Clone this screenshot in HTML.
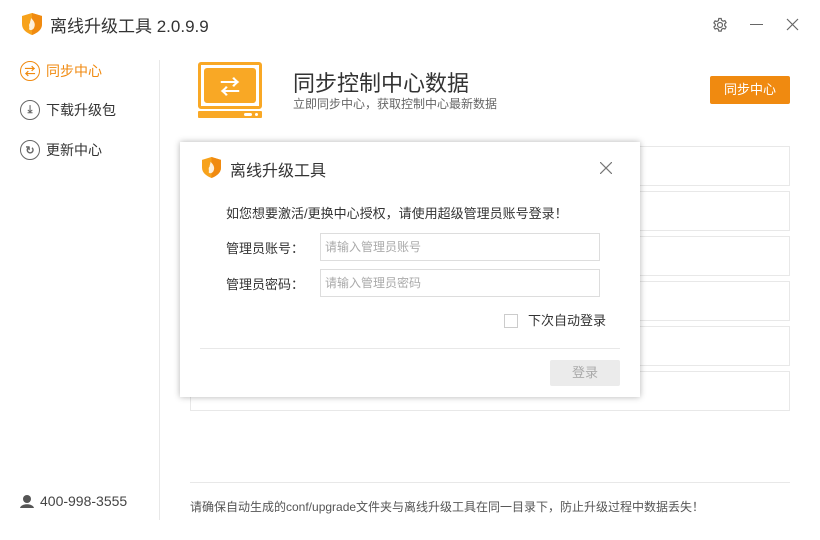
<!DOCTYPE html>
<html><head><meta charset="utf-8"><style>
*{margin:0;padding:0;box-sizing:border-box}
body{width:820px;height:540px;background:#fff;position:relative;overflow:hidden;font-family:"Liberation Sans","Noto Sans CJK SC",sans-serif;color:#333}
.a{position:absolute}
.row{position:absolute;left:190px;width:600px;height:40px;border:1px solid #e8e8e8}
.nav{position:absolute;left:20px;font-size:14px;display:flex;align-items:center;gap:6px;color:#333}
.ic{width:20px;height:20px;border:1.5px solid #666;border-radius:50%;display:flex;align-items:center;justify-content:center}
</style></head><body>
<svg class="a" style="left:22px;top:13px" width="20" height="22" viewBox="0 0 20 22"><path d="M10 0L20 3V11C20 17 15 20 10 22C5 20 0 17 0 11V3Z" fill="#f7a21b"/><path d="M10 0L20 3V11C20 17 15 20 10 22Z" fill="#f08a10"/><path d="M9 5C12 8 14 11 12 15C11 17 8 18 7 16C8 14 6 12 8 10C8 8 9 7 9 5Z" fill="#fff" opacity=".85"/></svg>
<div class="a" style="left:50px;top:12px;font-size:17px;color:#333">离线升级工具 2.0.9.9</div>
<svg class="a" style="left:712px;top:17px" width="16" height="16" viewBox="0 0 16 16" fill="none" stroke="#666" stroke-width="1.2"><circle cx="8" cy="8" r="2.5"/><path d="M6.8 1.5h2.4l.4 1.8 1.5.9 1.8-.6 1.2 2-1.4 1.3v1.8l1.4 1.3-1.2 2-1.8-.6-1.5.9-.4 1.8H6.8l-.4-1.8-1.5-.9-1.8.6-1.2-2 1.4-1.3V7.2L1.9 5.9l1.2-2 1.8.6 1.5-.9z"/></svg>
<div class="a" style="left:750px;top:24px;width:13px;height:1px;background:#666"></div>
<svg class="a" style="left:786px;top:18px" width="13" height="13" viewBox="0 0 13 13" stroke="#666" stroke-width="1.2"><path d="M1 1L12 12M12 1L1 12"/></svg>
<div class="a" style="left:159px;top:60px;width:1px;height:460px;background:#e8e8e8"></div>
<div class="nav" style="top:61px;color:#f08a10"><div class="ic" style="border-color:#f08a10"><span style="font-size:11px;color:#f08a10;font-weight:bold">⇄</span></div>同步中心</div>
<div class="nav" style="top:100px"><div class="ic"><span style="font-size:11px;color:#666;font-weight:bold">⤓</span></div>下载升级包</div>
<div class="nav" style="top:140px"><div class="ic"><span style="font-size:11px;color:#666;font-weight:bold">↻</span></div>更新中心</div>
<svg class="a" style="left:20px;top:494px" width="14" height="14" viewBox="0 0 14 14"><circle cx="7" cy="5" r="4" fill="#555"/><path d="M0 14C1 9 13 9 14 14Z" fill="#555"/></svg>
<div class="a" style="left:40px;top:493px;font-size:14px;color:#444">400-998-3555</div>
<div class="a" style="left:198px;top:62px;width:64px;height:47px;border:3px solid #f9a825;border-radius:3px;padding:3px"><div style="width:100%;height:100%;background:#f9a825;border-radius:3px;display:flex;align-items:center;justify-content:center;color:#fff;font-size:20px;font-weight:bold">⇄</div></div>
<div class="a" style="left:198px;top:111px;width:64px;height:7px;background:#f9a825;border-radius:1px"><div style="position:absolute;left:46px;top:2px;width:8px;height:3px;background:#fff;border-radius:2px"></div><div style="position:absolute;left:57px;top:2px;width:3px;height:3px;background:#fff;border-radius:2px"></div></div>
<div class="a" style="left:293px;top:66px;font-size:22px;color:#333">同步控制中心数据</div>
<div class="a" style="left:293px;top:95px;font-size:12px;color:#666">立即同步中心，获取控制中心最新数据</div>
<div class="a" style="left:710px;top:76px;width:80px;height:28px;background:#f08a10;border-radius:2px;color:#fff;font-size:13px;text-align:center;line-height:28px">同步中心</div>
<div class="row" style="top:146px"></div><div class="row" style="top:191px"></div><div class="row" style="top:236px"></div><div class="row" style="top:281px"></div><div class="row" style="top:326px"></div><div class="row" style="top:371px"></div>
<div class="a" style="left:190px;top:482px;width:600px;height:1px;background:#e8e8e8"></div>
<div class="a" style="left:190px;top:498px;font-size:12px;color:#555">请确保自动生成的conf/upgrade文件夹与离线升级工具在同一目录下，防止升级过程中数据丢失！</div>
<div class="a" style="left:180px;top:142px;width:460px;height:255px;background:#fff;box-shadow:0 0 6px rgba(0,0,0,.3)">
<svg class="a" style="left:22px;top:15px" width="19" height="21" viewBox="0 0 20 22"><path d="M10 0L20 3V11C20 17 15 20 10 22C5 20 0 17 0 11V3Z" fill="#f7a21b"/><path d="M10 0L20 3V11C20 17 15 20 10 22Z" fill="#f08a10"/><path d="M9 5C12 8 14 11 12 15C11 17 8 18 7 16C8 14 6 12 8 10C8 8 9 7 9 5Z" fill="#fff" opacity=".85"/></svg>
<div class="a" style="left:50px;top:15px;font-size:16px;color:#333">离线升级工具</div>
<svg class="a" style="left:420px;top:20px" width="12" height="12" viewBox="0 0 12 12" stroke="#777" stroke-width="1.2"><path d="M0 0L12 12M12 0L0 12"/></svg>
<div class="a" style="left:46px;top:61px;font-size:13px;color:#333">如您想要激活/更换中心授权，请使用超级管理员账号登录！</div>
<div class="a" style="left:46px;top:96px;font-size:13px;color:#333">管理员账号：</div>
<div class="a" style="left:140px;top:91px;width:280px;height:28px;border:1px solid #ddd;font-size:12px;color:#aaa;line-height:26px;padding-left:4px">请输入管理员账号</div>
<div class="a" style="left:46px;top:132px;font-size:13px;color:#333">管理员密码：</div>
<div class="a" style="left:140px;top:127px;width:280px;height:28px;border:1px solid #ddd;font-size:12px;color:#aaa;line-height:26px;padding-left:4px">请输入管理员密码</div>
<div class="a" style="left:324px;top:172px;width:14px;height:14px;border:1px solid #ccc"></div>
<div class="a" style="left:348px;top:168px;font-size:13px;color:#333">下次自动登录</div>
<div class="a" style="left:20px;top:206px;width:420px;height:1px;background:#e8e8e8"></div>
<div class="a" style="left:370px;top:218px;width:70px;height:26px;background:#ebebeb;border-radius:2px;color:#aaa;font-size:13px;text-align:center;line-height:26px">登录</div>
</div>
</body></html>
